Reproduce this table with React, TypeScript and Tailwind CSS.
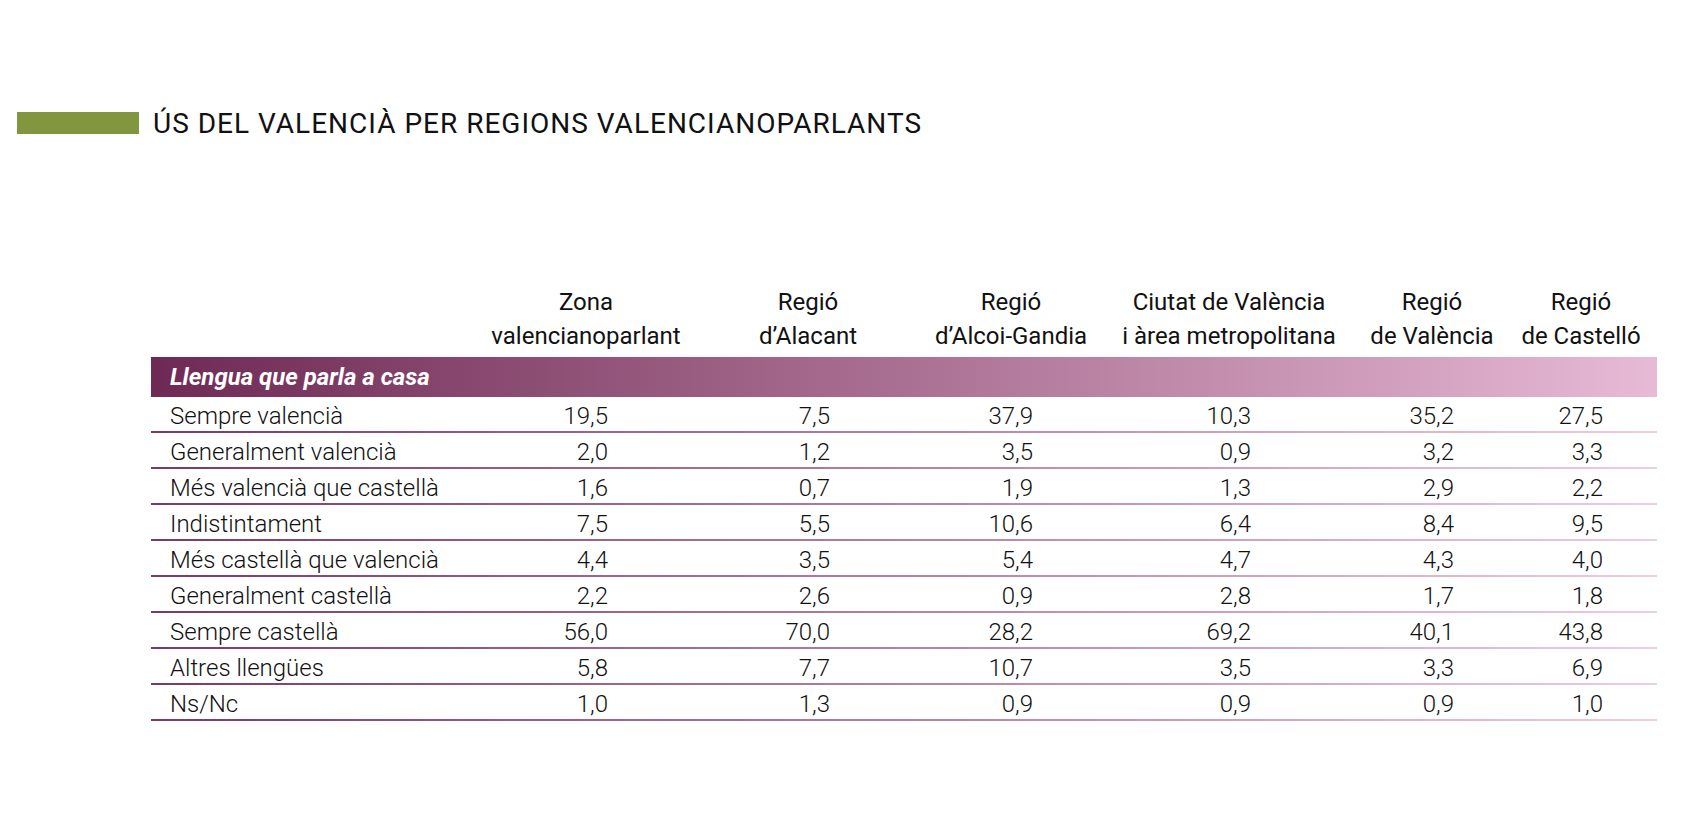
const columns = [
  { top: "Zona", bottom: "valencianoparlant", w: "w-[232px]", pr: "pr-[94px]" },
  { top: "Regió", bottom: "d’Alacant", w: "w-[212px]", pr: "pr-[84px]" },
  { top: "Regió", bottom: "d’Alcoi-Gandia", w: "w-[194px]", pr: "pr-[75px]" },
  { top: "Ciutat de València", bottom: "i àrea metropolitana", w: "w-[242px]", pr: "pr-[99px]" },
  { top: "Regió", bottom: "de València", w: "w-[164px]", pr: "pr-[60px]" },
  { top: "Regió", bottom: "de Castelló", w: "w-[143px]", pr: "pr-[54px]" },
];

const rows: [string, string[]][] = [
  ["Sempre valencià", ["19,5", "7,5", "37,9", "10,3", "35,2", "27,5"]],
  ["Generalment valencià", ["2,0", "1,2", "3,5", "0,9", "3,2", "3,3"]],
  ["Més valencià que castellà", ["1,6", "0,7", "1,9", "1,3", "2,9", "2,2"]],
  ["Indistintament", ["7,5", "5,5", "10,6", "6,4", "8,4", "9,5"]],
  ["Més castellà que valencià", ["4,4", "3,5", "5,4", "4,7", "4,3", "4,0"]],
  ["Generalment castellà", ["2,2", "2,6", "0,9", "2,8", "1,7", "1,8"]],
  ["Sempre castellà", ["56,0", "70,0", "28,2", "69,2", "40,1", "43,8"]],
  ["Altres llengües", ["5,8", "7,7", "10,7", "3,5", "3,3", "6,9"]],
  ["Ns/Nc", ["1,0", "1,3", "0,9", "0,9", "0,9", "1,0"]],
];

export default function App() {
  return (
    <div className="h-[824px] w-[1688px] bg-white text-[#111] font-['Roboto',sans-serif]">
      {/* Title */}
      <div className="flex items-center pt-[102px]">
        <div className="ml-[17px] h-[22px] w-[122px] bg-[#82963f]" />
        <h1 className="ml-[14px] pt-[3px] text-[28px] leading-[38px] font-normal tracking-[1px]">
          ÚS DEL VALENCIÀ PER REGIONS VALENCIANOPARLANTS
        </h1>
      </div>

      {/* Table */}
      <div className="ml-[151px] mt-[142px] w-[1506px]">
        <div className="flex pb-[4px] text-[24px] leading-[34px] font-normal">
          <div className="w-[319px]" />
          {columns.map((c, i) => (
            <div key={i} className={`${c.w} text-center ${i === 5 ? "pr-[9px]" : ""}`}>
              <div>{c.top}</div>
              <div>{c.bottom}</div>
            </div>
          ))}
        </div>

        <div className="h-[40px] bg-linear-to-r from-[#6e2a55] to-[#e7bad6] pl-[19px] pt-[1px] text-[24px] leading-[39px] font-bold italic text-white">
          Llengua que parla a casa
        </div>

        {rows.map(([label, values]) => (
          <div key={label}>
            <div className="flex h-[34px] pt-[4px] text-[24px] leading-[30px] font-light">
              <div className="w-[319px] pl-[19px]">{label}</div>
              {values.map((v, i) => (
                <div key={i} className={`${columns[i].w} ${columns[i].pr} text-right`}>
                  {v}
                </div>
              ))}
            </div>
            <div className="h-[2px] bg-linear-to-r from-[#7a3a65] to-[#efcde1]" />
          </div>
        ))}
      </div>
    </div>
  );
}
